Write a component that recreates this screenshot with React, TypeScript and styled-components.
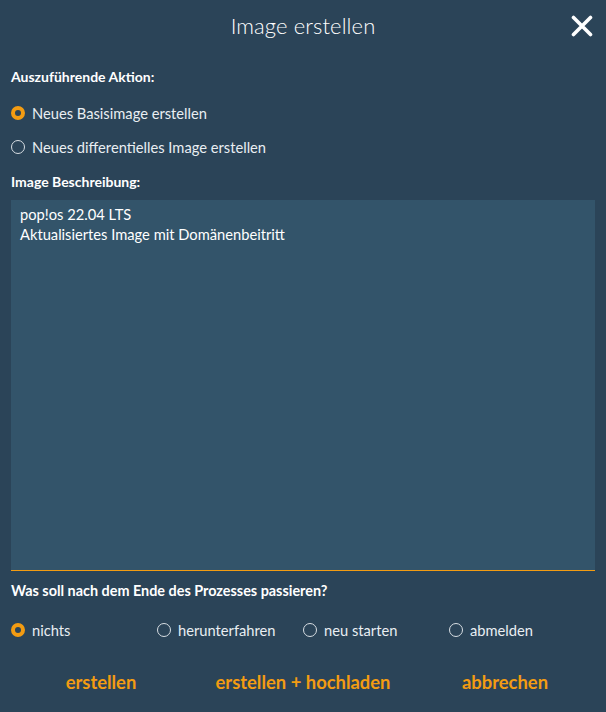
import React, { useState } from "react";
import styled, { createGlobalStyle } from "styled-components";

const GlobalStyle = createGlobalStyle`
  html, body {
    margin: 0;
    padding: 0;
    background: #2b4458;
  }
  body {
    font-family: "Lato", "Open Sans", sans-serif;
    color: #ffffff;
  }
`;

const actions = [
  "Neues Basisimage erstellen",
  "Neues differentielles Image erstellen",
];

const afterOptions = ["nichts", "herunterfahren", "neu starten", "abmelden"];

const App = () => {
  const [action, setAction] = useState(0);
  const [after, setAfter] = useState(0);
  const [description, setDescription] = useState(
    "pop!os 22.04 LTS\nAktualisiertes Image mit Domänenbeitritt"
  );

  return (
    <>
      <GlobalStyle />
      <Dialog>
        <Header>
          <Title>Image erstellen</Title>
          <CloseButton aria-label="schließen">
            <svg width="22" height="22" viewBox="0 0 22 22">
              <path
                d="M2.5 2.5 L19.5 19.5 M19.5 2.5 L2.5 19.5"
                stroke="#ffffff"
                strokeWidth="3.6"
                strokeLinecap="round"
              />
            </svg>
          </CloseButton>
        </Header>

        <Label>Auszuführende Aktion:</Label>
        <ActionList>
          {actions.map((text, i) => (
            <RadioRow key={text} onClick={() => setAction(i)}>
              <RadioDot $checked={action === i} />
              {text}
            </RadioRow>
          ))}
        </ActionList>

        <Label>Image Beschreibung:</Label>
        <TextArea
          value={description}
          onChange={(e: React.ChangeEvent<HTMLTextAreaElement>) =>
            setDescription(e.target.value)
          }
        />

        <AfterLabel>Was soll nach dem Ende des Prozesses passieren?</AfterLabel>
        <AfterGrid>
          {afterOptions.map((text, i) => (
            <RadioRow key={text} onClick={() => setAfter(i)}>
              <RadioDot $checked={after === i} />
              {text}
            </RadioRow>
          ))}
        </AfterGrid>

        <Footer>
          <ActionButton>erstellen</ActionButton>
          <ActionButton>erstellen + hochladen</ActionButton>
          <ActionButton>abbrechen</ActionButton>
        </Footer>
      </Dialog>
    </>
  );
};

const Dialog = styled.div`
  width: 606px;
  height: 712px;
  box-sizing: border-box;
  padding: 0 11px;
  display: flex;
  flex-direction: column;
`;

const Header = styled.div`
  position: relative;
  height: 50px;
  display: flex;
  align-items: center;
  justify-content: center;
`;

const Title = styled.h1`
  margin: 0;
  font-size: 22px;
  font-weight: 300;
  letter-spacing: 0.1px;
`;

const CloseButton = styled.button`
  position: absolute;
  right: 1px;
  top: 14px;
  width: 24px;
  height: 24px;
  padding: 0;
  border: none;
  background: none;
  display: flex;
  align-items: center;
  justify-content: center;
  cursor: pointer;
`;

const Label = styled.div`
  font-size: 14px;
  font-weight: 700;
  line-height: 18px;
  margin-top: 18px;
`;

const ActionList = styled.div`
  display: flex;
  flex-direction: column;
  gap: 16px;
  margin-top: 18px;
  margin-bottom: -1px;
`;

const RadioRow = styled.label`
  display: flex;
  align-items: center;
  gap: 7px;
  font-size: 14.7px;
  line-height: 18px;
  color: #e9eef2;
  cursor: pointer;
`;

const RadioDot = styled.span<{ $checked: boolean }>`
  width: 14px;
  height: 14px;
  box-sizing: border-box;
  border-radius: 50%;
  flex-shrink: 0;
  border: ${(p) => (p.$checked ? "4.5px solid #f39c12" : "1.5px solid #d8dee3")};
  background: ${(p) => (p.$checked ? "#2b4458" : "transparent")};
`;

const TextArea = styled.textarea`
  margin-top: 9px;
  height: 371px;
  box-sizing: border-box;
  padding: 4px 9px;
  border: none;
  border-bottom: 1px solid #f39c12;
  background: #33546a;
  color: #ffffff;
  font-family: "Lato", "Open Sans", sans-serif;
  font-size: 14.7px;
  line-height: 20px;
  resize: none;
  outline: none;
  caret-color: #f39c12;
`;

const AfterLabel = styled(Label)`
  font-size: 14.4px;
  margin-top: 11px;
`;

const AfterGrid = styled.div`
  display: grid;
  grid-template-columns: repeat(4, 146px);
  margin-top: 21px;
`;

const Footer = styled.div`
  display: grid;
  grid-template-columns: repeat(3, 1fr);
  margin: 32px -11px 0;
`;

const ActionButton = styled.button`
  border: none;
  background: none;
  padding: 0;
  font-family: "Lato", "Open Sans", sans-serif;
  font-size: 18.4px;
  font-weight: 700;
  color: #f39c12;
  text-align: center;
  cursor: pointer;
`;

export default App;
